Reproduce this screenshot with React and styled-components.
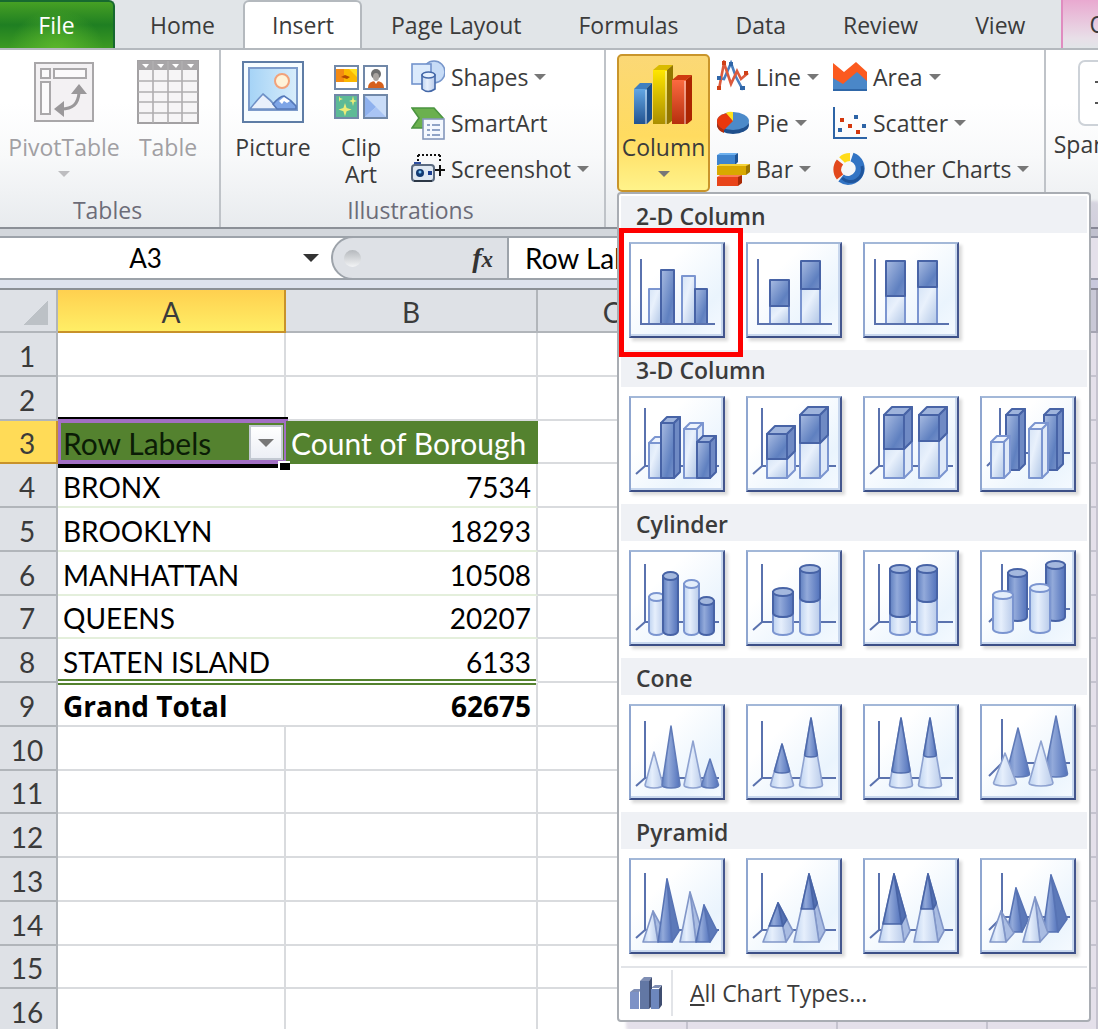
import React from "react";
import styled, { createGlobalStyle, css } from "styled-components";

const tabs = ["Home", "Insert", "Page Layout", "Formulas", "Data", "Review", "View"];

const columns = ["A", "B", "C", "D", "E", "F"];

const pivotRows = {
  4: ["BRONX", 7534],
  5: ["BROOKLYN", 18293],
  6: ["MANHATTAN", 10508],
  7: ["QUEENS", 20207],
  8: ["STATEN ISLAND", 6133],
  9: ["Grand Total", 62675],
};

const rowNumbers = Array.from({ length: 16 }, (_, i) => i + 1);

/* ---------- chart gallery drawings, all on a 96 x 96 board ---------- */

const LINE = "#5a72ae";
const fillOf = (dark) => (dark ? "url(#darkFill)" : "url(#lightFill)");
const lineOf = (dark) => (dark ? "#4763a6" : "#7b95d0");

const FlatAxis = () => <path d="M12 17V82H86" fill="none" stroke={LINE} strokeWidth="2" />;

const DeepAxis = ({ x = 16, top = 14, y = 72, dx = 9, dy = 8 }) => (
  <path
    d={`M${x} ${top}V${y}H90M${x} ${y}L${x - dx} ${y + dy}`}
    fill="none"
    stroke={LINE}
    strokeWidth="2"
  />
);

const Bar = ({ x, w, top, bottom = 82, dark, depth = 0 }) => (
  <g stroke={lineOf(dark)} strokeWidth="2" strokeLinejoin="round">
    {depth > 0 && (
      <>
        <path
          d={`M${x} ${top}l${depth} ${-depth}h${w}l${-depth} ${depth}z`}
          fill={dark ? "#9fb4dc" : "#eef4fd"}
        />
        <path
          d={`M${x + w} ${top}l${depth} ${-depth}V${bottom - depth}l${-depth} ${depth}z`}
          fill={dark ? "#6f8ac4" : "#dfe9f8"}
        />
      </>
    )}
    <rect x={x} y={top} width={w} height={bottom - top} fill={fillOf(dark)} />
  </g>
);

const StackBar = ({ x, w = 20, top, split, depth = 0 }) => (
  <>
    <Bar x={x} w={w} top={split} depth={depth} />
    <Bar x={x} w={w} top={top} bottom={split} depth={depth} dark />
  </>
);

const Tube = ({ x, w, top, bottom = 83, dark }) => {
  const r = w / 2;
  return (
    <g stroke={lineOf(dark)} strokeWidth="2">
      <path
        d={`M${x} ${top}V${bottom - 2}a${r} 4 0 0 0 ${w} 0V${top}z`}
        fill={dark ? "url(#darkTube)" : "url(#lightTube)"}
      />
      <ellipse cx={x + r} cy={top} rx={r} ry="4" fill={dark ? "#a4b8de" : "#e4eefb"} />
    </g>
  );
};

const StackTube = ({ x, w = 20, top, split }) => (
  <>
    <Tube x={x} w={w} top={split} />
    <Tube x={x} w={w} top={top} bottom={split + 2} dark />
  </>
);

const Cone = ({ x, top, w, bottom = 81, dark, split }) => {
  const r = w / 2;
  const k = split ? (split - top) / (bottom - top) : 0;
  return (
    <g strokeLinejoin="round">
      <path
        d={`M${x} ${top}L${x - r} ${bottom}a${r} 3 0 0 0 ${w} 0z`}
        fill={dark ? "url(#darkTube)" : "url(#lightTube)"}
        stroke={dark ? "#5f7ab8" : "#8ea2d0"}
        strokeWidth="1.6"
      />
      {split && (
        <path
          d={`M${x} ${top}L${x - r * k} ${split}a${r * k} 2 0 0 0 ${w * k} 0z`}
          fill="url(#darkTube)"
          stroke="#4f6bac"
          strokeWidth="1.6"
        />
      )}
    </g>
  );
};

const Pyramid = ({ x, top, left, right, bottom = 84, cx, cy = 73, dark, split }) => {
  const k = split ? (split - top) / (bottom - top) : 0;
  const at = (px, py) => `${x + (px - x) * k} ${top + (py - top) * k}`;
  return (
    <g strokeLinejoin="round" strokeWidth="1.6" stroke={dark ? "#5773b4" : "#8196c8"}>
      <path d={`M${x} ${top}L${right} ${bottom}L${cx} ${cy}z`} fill={dark ? "#5c79b9" : "#a9bce2"} />
      <path d={`M${x} ${top}L${left} ${bottom}H${right}z`} fill={dark ? "url(#darkTube)" : "url(#lightTube)"} />
      {split && (
        <g stroke="#4864a6">
          <path d={`M${x} ${top}L${at(right, bottom)}L${at(cx, cy)}z`} fill="#5370b2" />
          <path d={`M${x} ${top}L${at(left, bottom)}L${at(right, bottom)}z`} fill="url(#darkTube)" />
        </g>
      )}
    </g>
  );
};

const sections = [
  {
    title: "2-D Column",
    charts: [
      {
        name: "Clustered Column",
        marked: true,
        art: (
          <>
            <Bar x={20} w={12} top={47} />
            <Bar x={32} w={13} top={28} dark />
            <Bar x={53} w={13} top={34} />
            <Bar x={66} w={12} top={47} dark />
            <FlatAxis />
          </>
        ),
      },
      {
        name: "Stacked Column",
        art: (
          <>
            <StackBar x={24} w={19} top={38} split={64} />
            <StackBar x={55} w={19} top={19} split={47} />
            <FlatAxis />
          </>
        ),
      },
      {
        name: "100% Stacked Column",
        art: (
          <>
            <StackBar x={23} w={19} top={19} split={54} />
            <StackBar x={55} w={19} top={19} split={45} />
            <FlatAxis />
          </>
        ),
      },
    ],
  },
  {
    title: "3-D Column",
    charts: [
      {
        name: "3-D Clustered Column",
        art: (
          <>
            <DeepAxis top={12} y={70} />
            <Bar x={20} w={12} top={47} depth={6} />
            <Bar x={32} w={13} top={27} depth={6} dark />
            <Bar x={55} w={13} top={33} depth={6} />
            <Bar x={68} w={13} top={46} depth={6} dark />
          </>
        ),
      },
      {
        name: "Stacked Column in 3-D",
        art: (
          <>
            <DeepAxis top={12} y={70} />
            <StackBar x={21} top={38} split={63} depth={8} />
            <StackBar x={54} top={19} split={47} depth={8} />
          </>
        ),
      },
      {
        name: "100% Stacked Column in 3-D",
        art: (
          <>
            <DeepAxis top={12} y={70} />
            <StackBar x={21} top={19} split={53} depth={8} />
            <StackBar x={56} top={19} split={45} depth={8} />
          </>
        ),
      },
      {
        name: "3-D Column",
        art: (
          <>
            <DeepAxis x={20} top={12} y={57} dx={13} dy={13} />
            <Bar x={26} w={13} top={19} bottom={74} depth={6} dark />
            <Bar x={64} w={13} top={19} bottom={74} depth={6} dark />
            <Bar x={11} w={13} top={46} depth={6} />
            <Bar x={49} w={13} top={33} depth={6} />
          </>
        ),
      },
    ],
  },
  {
    title: "Cylinder",
    charts: [
      {
        name: "Clustered Cylinder",
        art: (
          <>
            <DeepAxis />
            <Tube x={20} w={15} top={47} />
            <Tube x={34} w={15} top={26} dark />
            <Tube x={55} w={15} top={34} />
            <Tube x={70} w={15} top={51} dark />
          </>
        ),
      },
      {
        name: "Stacked Cylinder",
        art: (
          <>
            <DeepAxis />
            <StackTube x={27} top={42} split={63} />
            <StackTube x={54} top={19} split={48} />
          </>
        ),
      },
      {
        name: "100% Stacked Cylinder",
        art: (
          <>
            <DeepAxis />
            <StackTube x={27} top={19} split={63} />
            <StackTube x={54} top={19} split={48} />
          </>
        ),
      },
      {
        name: "3-D Cylinder",
        art: (
          <>
            <DeepAxis x={22} y={59} dx={13} dy={13} />
            <Tube x={28} w={19} top={23} bottom={69} dark />
            <Tube x={66} w={19} top={15} bottom={69} dark />
            <Tube x={13} w={20} top={45} bottom={81} />
            <Tube x={50} w={20} top={38} bottom={81} />
          </>
        ),
      },
    ],
  },
  {
    title: "Cone",
    charts: [
      {
        name: "Clustered Cone",
        art: (
          <>
            <DeepAxis top={17} y={74} />
            <Cone x={25} top={48} w={18} />
            <Cone x={42} top={22} w={18} dark />
            <Cone x={64} top={37} w={18} />
            <Cone x={81} top={55} w={17} dark />
          </>
        ),
      },
      {
        name: "Stacked Cone",
        art: (
          <>
            <DeepAxis top={17} y={74} />
            <Cone x={36} top={40} w={23} split={67} />
            <Cone x={65} top={14} w={23} split={51} />
          </>
        ),
      },
      {
        name: "100% Stacked Cone",
        art: (
          <>
            <DeepAxis top={17} y={74} />
            <Cone x={38} top={14} w={23} split={67} />
            <Cone x={67} top={14} w={23} split={51} />
          </>
        ),
      },
      {
        name: "3-D Cone",
        art: (
          <>
            <DeepAxis x={22} top={15} y={59} dx={13} dy={13} />
            <Cone x={38} top={24} w={23} bottom={70} dark />
            <Cone x={76} top={12} w={23} bottom={70} dark />
            <Cone x={25} top={49} w={23} bottom={79} />
            <Cone x={61} top={37} w={24} bottom={79} />
          </>
        ),
      },
    ],
  },
  {
    title: "Pyramid",
    charts: [
      {
        name: "Clustered Pyramid",
        art: (
          <>
            <DeepAxis top={15} />
            <Pyramid x={24} top={53} left={14} right={29} cx={35} />
            <Pyramid x={38} top={21} left={29} right={43} cx={50} dark />
            <Pyramid x={61} top={34} left={51} right={67} cx={73} />
            <Pyramid x={75} top={47} left={67} right={81} cx={88} dark />
          </>
        ),
      },
      {
        name: "Stacked Pyramid",
        art: (
          <>
            <DeepAxis top={15} />
            <Pyramid x={32} top={45} left={17} right={40} cx={47} split={68} />
            <Pyramid x={63} top={16} left={48} right={73} cx={79} split={51} />
          </>
        ),
      },
      {
        name: "100% Stacked Pyramid",
        art: (
          <>
            <DeepAxis top={15} />
            <Pyramid x={31} top={16} left={16} right={41} cx={47} split={66} />
            <Pyramid x={65} top={16} left={51} right={75} cx={81} split={51} />
          </>
        ),
      },
      {
        name: "3-D Pyramid",
        art: (
          <>
            <DeepAxis x={22} top={15} y={59} dx={13} dy={13} />
            <Pyramid x={36} top={30} left={27} right={42} bottom={74} cx={48} cy={62} dark />
            <Pyramid x={71} top={17} left={63} right={78} bottom={74} cx={87} cy={61} dark />
            <Pyramid x={21} top={53} left={10} right={26} cx={34} cy={75} />
            <Pyramid x={55} top={39} left={43} right={60} cx={68} cy={75} />
          </>
        ),
      },
    ],
  },
];

const SharedFills = () => (
  <HiddenDefs aria-hidden="true">
    <defs>
      <linearGradient id="darkFill" x1="0" y1="0" x2="1" y2="1">
        <stop offset="0" stopColor="#a9bce2" />
        <stop offset="0.7" stopColor="#5f80c0" />
        <stop offset="1" stopColor="#7590c8" />
      </linearGradient>
      <linearGradient id="lightFill" x1="0" y1="0" x2="1" y2="1">
        <stop offset="0" stopColor="#d6e4f6" />
        <stop offset="0.4" stopColor="#e9f1fc" />
        <stop offset="1" stopColor="#b0c6e6" />
      </linearGradient>
      <linearGradient id="darkTube" x1="0" x2="1">
        <stop offset="0" stopColor="#5f7fc0" />
        <stop offset="0.35" stopColor="#93aada" />
        <stop offset="1" stopColor="#5272bb" />
      </linearGradient>
      <linearGradient id="lightTube" x1="0" x2="1">
        <stop offset="0" stopColor="#bdd2f0" />
        <stop offset="0.4" stopColor="#e6effc" />
        <stop offset="1" stopColor="#b9cbea" />
      </linearGradient>
    </defs>
  </HiddenDefs>
);

/* ---------- ribbon icons ---------- */

const PivotIcon = () => (
  <svg width="64" height="64" viewBox="0 0 64 64">
    <rect x="3" y="3" width="58" height="58" fill="#f3f1f3" stroke="#a9a7a9" strokeWidth="2" />
    <g fill="#fbfafb" stroke="#aaa8aa" strokeWidth="2">
      <rect x="9" y="9" width="9" height="9" />
      <rect x="22" y="9" width="32" height="9" />
      <rect x="9" y="22" width="9" height="32" />
    </g>
    <path d="M29 49C41 49 46 44 47 33" fill="none" stroke="#9a989a" strokeWidth="3" />
    <path d="M22 49l10-8v16zM47 24l8 10H39z" fill="#9a989a" />
  </svg>
);

const TableIcon = () => (
  <svg width="64" height="64" viewBox="0 0 64 64">
    <rect x="2" y="1" width="60" height="62" fill="#f6f5f6" stroke="#a3a1a3" strokeWidth="2" />
    <rect x="2" y="1" width="60" height="9" fill="#a8a6a8" />
    <path d="M6 4h7l-3 4zM21 4h7l-3 4zM36 4h7l-3 4zM51 4h7l-3 4z" fill="#fff" />
    <path
      d="M17 1V63M32 1V63M46 1V63M2 21H62M2 32H62M2 42H62M2 53H62"
      stroke="#b0aeb0"
      strokeWidth="1.6"
    />
  </svg>
);

const PictureIcon = () => (
  <svg width="64" height="64" viewBox="0 0 64 64">
    <defs>
      <linearGradient id="sky" x1="0" x2="1">
        <stop offset="0" stopColor="#a5d3f6" />
        <stop offset="1" stopColor="#d8edfb" />
      </linearGradient>
    </defs>
    <rect x="2" y="2" width="60" height="60" fill="#f6fcff" stroke="#5f7da6" strokeWidth="2" />
    <rect x="8" y="8" width="48" height="42" fill="url(#sky)" stroke="#7d9ccb" strokeWidth="2" />
    <circle cx="41" cy="21" r="7" fill="#fff3d8" stroke="#f2a27a" strokeWidth="2" />
    <path d="M9 49Q16 40 22 34Q30 40 37 49z" fill="#e9f0fb" stroke="#6f90c6" strokeWidth="1.6" />
    <path d="M32 44Q39 36 43 36Q50 40 55 46V49H36z" fill="#7ea5e6" stroke="#5578b8" strokeWidth="1.6" />
    <path d="M38 41l5-4 6 4-3 2-3-2-2 3z" fill="#fff" />
  </svg>
);

const ClipArtIcon = () => (
  <svg width="64" height="64" viewBox="0 0 64 64">
    <g stroke="#7188a8" strokeWidth="2">
      <rect x="6" y="6" width="23" height="23" fill="#fff" />
      <rect x="35" y="6" width="23" height="23" fill="#fff" />
      <rect x="6" y="35" width="23" height="23" fill="#5dba96" />
      <rect x="35" y="35" width="23" height="23" fill="#c9dcf8" />
    </g>
    <path d="M7 9h21v13H7z" fill="#fbb800" />
    <path d="M7 9h8v13H7z" fill="#f48a12" />
    <path d="M12 17l4-2 5 2-3 2z" fill="#b34a00" />
    <path d="M20 9h8v8z" fill="#ffdf1c" />
    <circle cx="47" cy="14" r="5" fill="#6e6e6e" />
    <ellipse cx="47" cy="17" rx="3" ry="4" fill="#a9a4a0" />
    <path d="M39 28q0-7 8-7t8 7z" fill="#d5601b" />
    <path d="M45 21l2 3 2-3z" fill="#fff" />
    <path
      d="M16 43l1.600 5 5 1.600-5 1.600-1.600 5-1.600-5-5-1.600 5-1.600zM24 36l1 4 3 1-3 1-1 4-1-4-3-1 3-1zM10 36l1 2 3 1-3 1-1 2z"
      fill="#ecec78"
    />
    <path d="M36 36l11 11-11 10z" fill="#8fb1ee" />
    <path d="M36 57l11-10 10 10z" fill="#a9c4f4" />
  </svg>
);

const ColumnIcon = () => (
  <svg width="64" height="64" viewBox="0 0 64 64">
    <defs>
      <linearGradient id="colBlue" x2="0" y2="1">
        <stop offset="0" stopColor="#62a6e4" />
        <stop offset="1" stopColor="#20508e" />
      </linearGradient>
      <linearGradient id="colGold" x2="0" y2="1">
        <stop offset="0" stopColor="#ffe600" />
        <stop offset="1" stopColor="#a98c00" />
      </linearGradient>
      <linearGradient id="colRed" x2="0" y2="1">
        <stop offset="0" stopColor="#fb6a40" />
        <stop offset="1" stopColor="#b52d0c" />
      </linearGradient>
    </defs>
    <path d="M2 29l6-6h12l-6 6z" fill="#3f7fc0" />
    <path d="M14 29l6-6v36l-6 6z" fill="#1c4f8c" />
    <path d="M2 29h13v36H2z" fill="url(#colBlue)" />
    <path d="M21 10l6-5h14l-6 5z" fill="#d9bb00" />
    <path d="M35 10l6-5v55l-6 5z" fill="#927600" />
    <path d="M21 10h14v55H21z" fill="url(#colGold)" />
    <path d="M40 20l6-5h14l-6 5z" fill="#cf3a10" />
    <path d="M54 20l6-5v45l-6 5z" fill="#ac2500" />
    <path d="M40 20h14v45H40z" fill="url(#colRed)" />
    <path d="M14 30v34M34 11v53M53 21v43" stroke="#fff" strokeOpacity="0.5" strokeWidth="1.6" />
  </svg>
);

const SparkIcon = () => (
  <SparkFrame>
    <svg width="56" height="60" viewBox="0 0 56 60">
      <path d="M14 20h12l6-6 8 8M14 41h30" fill="none" stroke="#555" strokeWidth="2" />
    </svg>
  </SparkFrame>
);

const smallIcons = {
  shapes: (
    <>
      <circle cx="23" cy="12" r="11" fill="#c7dcf7" stroke="#7796cb" strokeWidth="1.600" />
      <rect x="1" y="4" width="19" height="20" fill="#dbeafc" stroke="#7293cc" strokeWidth="1.600" />
      <path d="M11 15v14q6 5 13 0V15z" fill="url(#lightTube)" stroke="#4468a8" strokeWidth="1.600" />
      <ellipse cx="17.500" cy="15" rx="6.500" ry="3" fill="#e5f0fd" stroke="#4468a8" strokeWidth="1.600" />
    </>
  ),
  smartart: (
    <>
      <path d="M1 2h22l9 10-9 10H1l7-10z" fill="#6bb04e" stroke="#4b9440" strokeWidth="1.600" />
      <rect x="12" y="13" width="21" height="20" fill="#f4f8fe" stroke="#8497bb" strokeWidth="1.600" />
      <path d="M16 19h3M16 24h3M16 29h3M21 19h8M21 24h8M21 29h8" stroke="#6e86b4" strokeWidth="1.600" />
    </>
  ),
  screenshot: (
    <>
      <path d="M7 3H31M7 3V9M29 3V11" fill="none" stroke="#111" strokeWidth="2" strokeDasharray="2 2" />
      <rect x="3" y="10" width="7" height="4" fill="#2f4fa0" />
      <rect x="1" y="13" width="22" height="16" rx="3" fill="#dfe8f2" stroke="#5a6a80" strokeWidth="2" />
      <path d="M3 29h18" stroke="#2c3746" strokeWidth="2" />
      <circle cx="9" cy="21" r="4" fill="#123a72" />
      <circle cx="9" cy="20" r="1.500" fill="#7cc4f5" />
      <rect x="17" y="19" width="4" height="4" fill="#1c3f90" />
      <path d="M24 18h10M29 13v11" stroke="#111" strokeWidth="2" />
    </>
  ),
  line: (
    <>
      <path d="M2 18l6 1 7-16 5 14 7 13" fill="none" stroke="#4a7fc0" strokeWidth="2.600" />
      <path d="M3 29L8 3l7 21 6-13 4 8 7-6" fill="none" stroke="#dc5a3c" strokeWidth="2.600" />
      <path d="M1 16h4v4H1zM13 2h4v4h-4zM24 26h5v4h-5z" fill="#2f66a8" />
      <path d="M28 11h4v4h-4zM1 26h4v4H1zM6 1h4v4H6z" fill="#cf3f16" />
    </>
  ),
  pie: (
    <>
      <ellipse cx="17" cy="19" rx="16" ry="9" fill="#1f4f8c" />
      <ellipse cx="17" cy="15" rx="16" ry="9" fill="#4c8ac9" />
      <path d="M17 15L8 24Q0 20 1 14Q2 9 11 7z" fill="#e8380d" />
      <path d="M17 15L10 7q3-2 7-1z" fill="#ffe11b" />
      <path d="M1 15q0 6 7 9v3q-7-3-7-8z" fill="#b52d0a" />
    </>
  ),
  bar: (
    <>
      <path d="M1 3l3-2h18l-3 2z" fill="#6db0ee" />
      <path d="M1 3h18v10H1z" fill="#3f84cd" />
      <path d="M19 3l3-2v9l-3 3z" fill="#1f5494" />
      <path d="M1 14l3-2h30l-3 2z" fill="#f5d23a" />
      <path d="M1 14h29v9H1z" fill="#d9a800" />
      <path d="M30 14l4-2v8l-4 3z" fill="#9b7600" />
      <path d="M1 25l3-2h22l-3 2z" fill="#fb7d52" />
      <path d="M1 25h21v9H1z" fill="#e8441a" />
      <path d="M22 25l4-2v8l-4 3z" fill="#a92a05" />
    </>
  ),
  area: (
    <>
      <path d="M0 3l11 9L23 2l11 10v18H0z" fill="#fb5a1f" />
      <path d="M0 18l10 6 14-12 10 9v10H0z" fill="#4a87c8" />
      <path d="M0 29h34v2H0z" fill="#2f67a8" />
    </>
  ),
  scatter: (
    <>
      <path d="M1 1V32H34" fill="none" stroke="#2d64a6" strokeWidth="2" />
      <path d="M7 12h4v4H7zM15 18h4v4h-4zM23 24h4v4h-4z" fill="#d4380d" />
      <path d="M5 22h4v4H5zM21 9h4v4h-4zM29 18h4v4h-4z" fill="#2d64a6" />
    </>
  ),
  other: (
    <>
      <path d="M19 5A12 12 0 1 1 8 26" fill="none" stroke="#3274c4" strokeWidth="9" />
      <path d="M29 14A12 12 0 0 1 9 26" fill="none" stroke="#1f559c" strokeWidth="3" />
      <path d="M7 25A12 12 0 0 1 7 10" fill="none" stroke="#e2481c" strokeWidth="8" />
      <path d="M9 8Q12 5 17 5" fill="none" stroke="#ffdc1a" strokeWidth="8" />
    </>
  ),
};

const SmallButton = ({ icon, label, menu }) => (
  <SmallTool type="button">
    <svg width="34" height="34" viewBox="0 0 34 34" aria-hidden="true">
      {smallIcons[icon]}
    </svg>
    {label}
    {menu && <Caret />}
  </SmallTool>
);

const ChartMenu = () => (
  <Menu role="menu" aria-label="Column charts">
    {sections.map((section) => (
      <section key={section.title}>
        <MenuHeading>{section.title}</MenuHeading>
        <TileGrid>
          {section.charts.map((chart) => (
            <Tile key={chart.name} type="button" role="menuitem" aria-label={chart.name}>
              <svg width="96" height="96" viewBox="0 0 96 96" aria-hidden="true">
                {chart.art}
              </svg>
              {chart.marked && <RedFrame />}
            </Tile>
          ))}
        </TileGrid>
      </section>
    ))}
    <AllCharts type="button" role="menuitem">
      <AllChartsIcon>
        <svg width="34" height="34" viewBox="0 0 34 34" aria-hidden="true">
          <path d="M1 16l4-3h8l-3 3zM11 5l4-4h8l-3 4zM22 12l4-3h7l-3 3z" fill="#7f8eb4" />
          <path d="M1 16h9v17H1z" fill="#7d92c6" />
          <path d="M11 5h9v28h-9z" fill="#6277a4" />
          <path d="M20 5l3-4v29l-3 3z" fill="#3f4d70" />
          <path d="M22 13h8v20h-8z" fill="#6d87bd" />
          <path d="M30 13l3-4v20l-3 4z" fill="#3f4d70" />
        </svg>
      </AllChartsIcon>
      <span>
        <u>A</u>ll Chart Types...
      </span>
    </AllCharts>
  </Menu>
);

const Sheet = () => (
  <Grid>
    <colgroup>
      <Col $w={58} />
      <Col $w={228} />
      <Col $w={252} />
      <Col $w={150} />
      <Col $w={150} />
      <Col $w={150} />
      <col />
    </colgroup>
    <thead>
      <tr>
        <Corner aria-label="Select all" />
        {columns.map((name) => (
          <ColumnHead key={name} scope="col" $active={name === "A"}>
            {name}
          </ColumnHead>
        ))}
      </tr>
    </thead>
    <tbody>
      {rowNumbers.map((n) => {
        const data = pivotRows[n];
        return (
          <tr key={n}>
            <RowHead scope="row" $active={n === 3}>
              {n}
            </RowHead>
            {n === 3 && (
              <>
                <HeaderCell $selected>
                  Row Labels
                  <Selection />
                  <FillHandle />
                  <FilterButton type="button" aria-label="Filter row labels">
                    <Caret $wide />
                  </FilterButton>
                </HeaderCell>
                <HeaderCell>Count of Borough</HeaderCell>
              </>
            )}
            {data && (
              <>
                <PivotCell $row={n}>{data[0]}</PivotCell>
                <PivotCell $row={n} $number>
                  {data[1]}
                </PivotCell>
              </>
            )}
            {n !== 3 && !data && (
              <>
                <Cell />
                <Cell />
              </>
            )}
            {columns.slice(2).map((name) => (
              <Cell key={name} />
            ))}
          </tr>
        );
      })}
    </tbody>
  </Grid>
);

const App = () => (
  <>
    <GlobalStyle />
    <SharedFills />
    <Screen>
      <TabBar>
        <FileTab type="button">File</FileTab>
        {tabs.map((tab) => (
          <Tab key={tab} type="button" $active={tab === "Insert"}>
            {tab}
          </Tab>
        ))}
        <ContextTab type="button">Options</ContextTab>
      </TabBar>

      <Ribbon>
        <Group>
          <GroupBody>
            <BigTool type="button" $w={128} disabled>
              <PivotIcon />
              PivotTable
              <Caret />
            </BigTool>
            <BigTool type="button" $w={80} disabled>
              <TableIcon />
              Table
            </BigTool>
            <Spacer $w={11} />
          </GroupBody>
          <GroupName>Tables</GroupName>
        </Group>

        <Group>
          <GroupBody>
            <Spacer $w={8} />
            <BigTool type="button" $w={88}>
              <PictureIcon />
              Picture
            </BigTool>
            <BigTool type="button" $w={88}>
              <ClipArtIcon />
              Clip Art
            </BigTool>
            <Spacer $w={6} />
            <ToolColumn $w={193}>
              <SmallButton icon="shapes" label="Shapes" menu />
              <SmallButton icon="smartart" label="SmartArt" />
              <SmallButton icon="screenshot" label="Screenshot" menu />
            </ToolColumn>
          </GroupBody>
          <GroupName>Illustrations</GroupName>
        </Group>

        <Group>
          <GroupBody>
            <Spacer $w={11} />
            <MenuAnchor>
              <BigTool type="button" $w={93} $open aria-haspopup="menu" aria-expanded="true">
                <ColumnIcon />
                Column
                <Caret />
              </BigTool>
              <ChartMenu />
            </MenuAnchor>
            <Spacer $w={6} />
            <ToolColumn $w={117}>
              <SmallButton icon="line" label="Line" menu />
              <SmallButton icon="pie" label="Pie" menu />
              <SmallButton icon="bar" label="Bar" menu />
            </ToolColumn>
            <ToolColumn $w={211}>
              <SmallButton icon="area" label="Area" menu />
              <SmallButton icon="scatter" label="Scatter" menu />
              <SmallButton icon="other" label="Other Charts" menu />
            </ToolColumn>
          </GroupBody>
          <GroupName>Charts</GroupName>
        </Group>

        <Group>
          <GroupBody>
            <Spacer $w={8} />
            <BigTool type="button" $w={110}>
              <SparkIcon />
              Sparklines
            </BigTool>
          </GroupBody>
        </Group>
      </Ribbon>

      <FormulaBar>
        <NameBox aria-label="Name box" defaultValue="A3" />
        <NameToggle type="button" aria-label="Show names">
          <Caret $wide $dark />
        </NameToggle>
        <FormulaPill>
          <Knob />
          <FxButton type="button" aria-label="Insert function">
            f<small>x</small>
          </FxButton>
        </FormulaPill>
        <FormulaInput aria-label="Formula" defaultValue="Row Labels" />
      </FormulaBar>

      <Sheet />
    </Screen>
  </>
);

// Styled components
const GlobalStyle = createGlobalStyle`
  *, *::before, *::after {
    box-sizing: border-box;
  }

  body {
    margin: 0;
    background: #fff;
    font-family: "Open Sans", "Noto Sans", sans-serif;
    font-size: 23px;
    color: #3b3b3b;
  }

  button, input {
    margin: 0;
    padding: 0;
    border: 0;
    background: none;
    font: inherit;
    color: inherit;
  }
`;

const HiddenDefs = styled.svg`
  position: absolute;
  width: 0;
  height: 0;
`;

const Screen = styled.div`
  height: 100vh;
  overflow: hidden;
`;

const TabBar = styled.nav`
  display: flex;
  height: 50px;
  background: #e1e5e8;
  border-bottom: 2px solid #b4b9be;
  overflow: hidden;
`;

const Tab = styled.button`
  flex: none;
  height: 50px;
  padding: 0 26px 2px 27px;
  border: 2px solid transparent;
  border-bottom: 0;
  line-height: 44px;

  ${({ $active }) =>
    $active &&
    css`
      background: #fff;
      border-color: #b4b9be;
      border-radius: 6px 6px 0 0;
    `}
`;

const FileTab = styled.button`
  flex: none;
  width: 115px;
  height: 48px;
  margin-right: 6px;
  border: 2px solid #17692f;
  border-left: 0;
  border-bottom: 0;
  border-radius: 0 6px 0 0;
  background: radial-gradient(ellipse at 50% 110%, #5cb82c 0%, rgba(70, 160, 40, 0) 60%),
    linear-gradient(#46a024 0%, #1f7f22 50%, #3c9a22 100%);
  color: #fff;
  line-height: 44px;
`;

const ContextTab = styled.button`
  flex: none;
  height: 48px;
  margin-left: 8px;
  padding: 0 26px;
  border-left: 2px solid #e08cc0;
  background: linear-gradient(#e9a9d0, #e8dfe8 80%, #e1e5e8);
  line-height: 48px;
`;

const Ribbon = styled.div`
  display: flex;
  height: 179px;
  background: linear-gradient(#fff 30%, #f8f9fa 60%, #e8ebee);
  border-bottom: 2px solid #8b9097;
`;

const Group = styled.div`
  display: flex;
  flex: none;
  flex-direction: column;
  padding-top: 4px;
  border-right: 2px solid #bfc3c8;
`;

const GroupBody = styled.div`
  display: flex;
  height: 138px;
`;

const GroupName = styled.div`
  padding-right: 4px;
  color: #6c6c78;
  line-height: 36px;
  text-align: center;
`;

const Spacer = styled.div`
  flex: none;
  width: ${({ $w }) => $w}px;
`;

const Caret = styled.i`
  width: 0;
  height: 0;
  border: ${({ $wide }) => ($wide ? 8 : 6)}px solid transparent;
  border-top-color: ${({ $dark }) => ($dark ? "#333" : "#777")};
  border-bottom: 0;
`;

const BigTool = styled.button`
  display: flex;
  flex: none;
  flex-direction: column;
  align-items: center;
  width: ${({ $w }) => $w}px;
  height: 138px;
  padding: 6px 12px 0;
  line-height: 27px;
  white-space: ${({ $w }) => ($w === 88 ? "normal" : "nowrap")};

  svg {
    flex: none;
    margin-bottom: 10px;
  }

  ${Caret} {
    margin-top: 10px;
  }

  &:disabled {
    color: #a19fa3;
  }

  &:disabled ${Caret} {
    border-top-color: #bdbdc0;
  }

  ${({ $open }) =>
    $open &&
    css`
      padding: 4px 12px 0;
      border: 2px solid #c9952b;
      border-radius: 5px;
      background: linear-gradient(#fbd876, #ffdb60 60%, #fff38a);
    `}
`;

const SparkFrame = styled.span`
  flex: none;
  width: 62px;
  height: 66px;
  margin-bottom: 5px;
  border: 2px solid #cdd2d8;
  border-radius: 7px;
  background: #fff;
`;

const MenuAnchor = styled.div`
  position: relative;
`;

const ToolColumn = styled.div`
  flex: none;
  width: ${({ $w }) => $w}px;
`;

const SmallTool = styled.button`
  display: flex;
  align-items: center;
  gap: 6px;
  height: 46px;
  white-space: nowrap;

  svg {
    flex: none;
  }
`;

const Menu = styled.div`
  position: absolute;
  top: 100%;
  left: 0;
  z-index: 10;
  width: 474px;
  padding: 2px;
  border: 2px solid #a9adb3;
  border-radius: 4px;
  background: #fff;
  box-shadow: 9px 9px 3px rgba(120, 100, 150, 0.2);
`;

const MenuHeading = styled.h2`
  height: 37px;
  margin: 0;
  padding-left: 15px;
  background: #eff1f5;
  font-size: 23px;
  font-weight: 600;
  line-height: 40px;
`;

const TileGrid = styled.div`
  display: grid;
  grid-template-columns: repeat(4, 96px);
  gap: 21px;
  padding: 9px 8px 12px;
`;

const Tile = styled.button`
  position: relative;
  width: 96px;
  height: 96px;
  background: linear-gradient(135deg, #fff 30%, #eaf4fd 75%, #f5faff);
  border: 2px solid #8fa8d0;
  border-color: #a3b8d8 #44568e #3c4f86 #8fa6d0;
  box-shadow: inset -2px -2px 0 #c9d8ee, 3px 3px 3px rgba(0, 0, 0, 0.15);

  svg {
    display: block;
    margin: -2px;
  }
`;

const RedFrame = styled.span`
  position: absolute;
  inset: -16px -20px -21px -12px;
  border: 5px solid #fe0000;
`;

const AllCharts = styled.button`
  display: flex;
  align-items: center;
  width: 100%;
  height: 52px;
  padding-left: 8px;
  border-top: 2px solid #e2e4e8;
  text-align: left;
`;

const AllChartsIcon = styled.span`
  display: flex;
  align-items: center;
  width: 44px;
  height: 46px;
  margin-right: 17px;
  border-right: 2px solid #e2e4e8;
`;

const FormulaBar = styled.div`
  display: flex;
  height: 59px;
  border-top: 7px solid #d3d7dc;
  border-bottom: 8px solid #dde2ee;
  box-shadow: inset 0 2px 0 #9da3aa, inset 0 -2px 0 #9da3aa;
  background: #fff;
  color: #000;
  font-family: Lato, "Open Sans", sans-serif;
  font-size: 26px;
`;

const NameBox = styled.input`
  width: 291px;
  text-align: center;
  outline: 0;
`;

const NameToggle = styled.button`
  display: flex;
  align-items: center;
  justify-content: center;
  width: 40px;
`;

const FormulaPill = styled.div`
  display: flex;
  align-items: center;
  justify-content: space-between;
  width: 178px;
  padding: 0 14px 0 11px;
  border: 2px solid #9da3aa;
  border-radius: 22px 0 0 22px;
  background: #dee1e6;
`;

const Knob = styled.span`
  width: 17px;
  height: 17px;
  border-radius: 50%;
  background: linear-gradient(#b5b9bd, #f3f4f6);
`;

const FxButton = styled.button`
  color: #333;
  font: italic bold 28px "Liberation Serif", serif;

  small {
    font-size: 23px;
  }
`;

const FormulaInput = styled.input`
  flex: 1;
  min-width: 0;
  padding-left: 16px;
  outline: 0;
  font-size: 28px;
`;

const Grid = styled.table`
  width: 100%;
  height: 745px;
  border-top: 2px solid #8b9097;
  border-spacing: 0;
  table-layout: fixed;
  font-family: Lato, "Open Sans", sans-serif;
  font-size: 28px;
  line-height: 32px;
`;

const Col = styled.col`
  width: ${({ $w }) => $w}px;
`;

const headCell = css`
  padding: 4px 0 0;
  border-right: 2px solid #b1b5ba;
  border-bottom: 2px solid #b1b5ba;
  background: #dee1e6;
  font-weight: 400;
`;

const Corner = styled.td`
  ${headCell}
  background: linear-gradient(135deg, #dee1e6 50%, #bcc1c6 50%) 24px 11px / 24px 24px no-repeat #dee1e6;
`;

const ColumnHead = styled.th`
  ${headCell}
  height: 43px;
  padding-top: 2px;
  ${({ $active }) =>
    $active &&
    css`
      background: linear-gradient(#ffd04f, #ffee66);
      border-color: #c8922a;
    `}
`;

const RowHead = styled.th`
  ${headCell}
  padding-right: 2px;
  ${({ $active }) =>
    $active &&
    css`
      background: #ffdb57;
      border-color: #c8922a;
    `}
`;

const Cell = styled.td`
  padding: 4px 5px 0;
  border-right: 2px solid #d9dbde;
  border-bottom: 2px solid #d9dbde;
  white-space: nowrap;
  color: #000;
`;

const HeaderCell = styled(Cell)`
  position: relative;
  border-color: #54822f;
  background: #54822f;
  color: ${({ $selected }) => ($selected ? "#0b1c06" : "#fff")};
  font-size: 30px;
`;

const Selection = styled.span`
  position: absolute;
  inset: -2px -4px -2px 0;
  border: 4px solid #a26fc4;
  border-left-width: 3px;
  box-shadow: 0 -2px 0 #000, 0 4px 0 #000;
`;

const FillHandle = styled.span`
  position: absolute;
  right: -6px;
  bottom: -8px;
  z-index: 1;
  width: 12px;
  height: 9px;
  border: 2px solid #fff;
  border-right: 0;
  border-bottom: 0;
  background: #000;
`;

const FilterButton = styled.button`
  position: absolute;
  right: 1px;
  bottom: 2px;
  display: flex;
  align-items: center;
  justify-content: center;
  width: 34px;
  height: 35px;
  border: 2px solid #c3c9d2;
  background: linear-gradient(#fff, #eceff5);
`;

const PivotCell = styled(Cell)`
  text-align: ${({ $number }) => ($number ? "right" : "left")};
  border-right-width: ${({ $number }) => ($number ? 2 : 0)}px;
  border-bottom-color: ${({ $row }) => ($row === 9 ? "#d9dbde" : $row === 8 ? "#fff" : "#e4efdc")};

  ${({ $row }) =>
    $row === 8 &&
    css`
      box-shadow: inset 0 -2px 0 #54822f;
    `}

  ${({ $row }) =>
    $row === 9 &&
    css`
      box-shadow: inset 0 2px 0 #54822f;
      font-family: "Open Sans", sans-serif;
      font-weight: 700;
    `}
`;

export default App;
